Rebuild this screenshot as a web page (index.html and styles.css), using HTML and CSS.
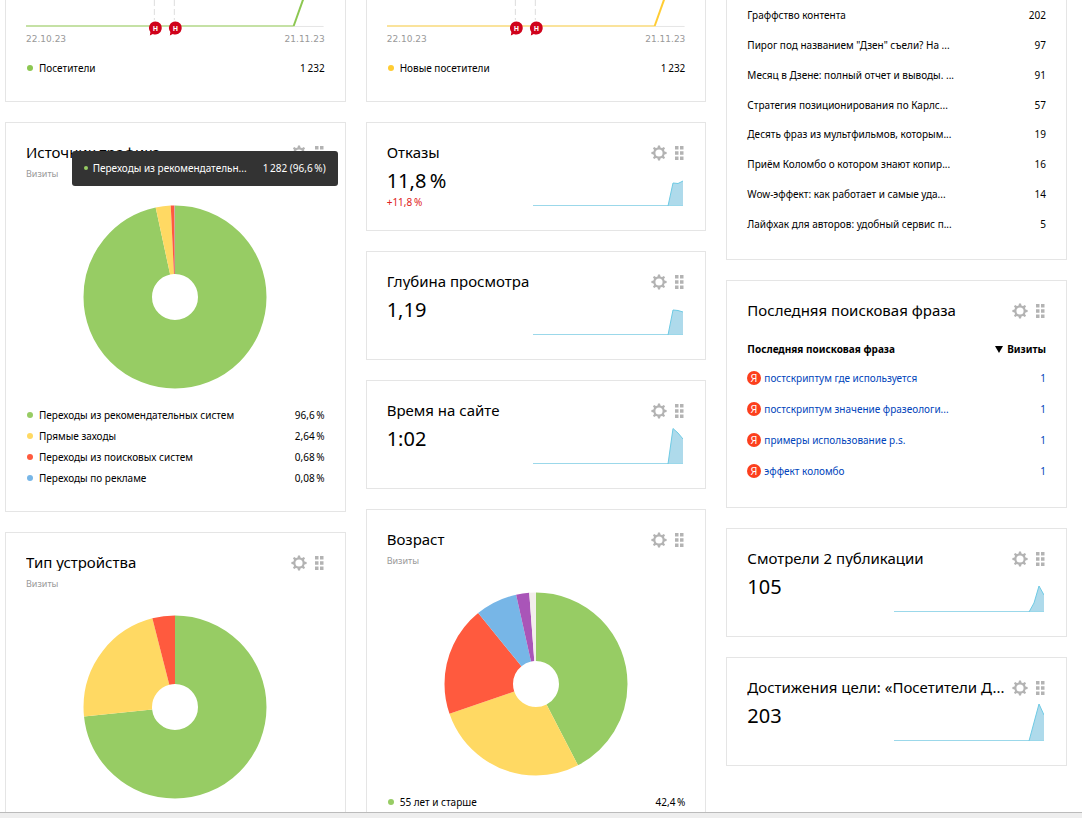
FILE: index.html
```html
<!DOCTYPE html>
<html lang="ru">
<head>
<meta charset="utf-8">
<meta name="viewport" content="width=device-width, initial-scale=1">
<title>Сводка</title>
<link rel="stylesheet" href="styles.css">
</head>
<body>
<svg class="defs" aria-hidden="true">
  <symbol id="gear" viewBox="0 0 16 16">
    <circle cx="8" cy="8" r="4.7" fill="none" stroke="currentColor" stroke-width="2.2"/>
    <g fill="currentColor">
      <path id="tooth" d="M6.5 3 7 .4h2L9.500 3z"/>
      <use href="#tooth" transform="rotate(45 8 8)"/>
      <use href="#tooth" transform="rotate(90 8 8)"/>
      <use href="#tooth" transform="rotate(135 8 8)"/>
      <use href="#tooth" transform="rotate(180 8 8)"/>
      <use href="#tooth" transform="rotate(225 8 8)"/>
      <use href="#tooth" transform="rotate(270 8 8)"/>
      <use href="#tooth" transform="rotate(315 8 8)"/>
    </g>
  </symbol>
  <symbol id="grip" viewBox="0 0 9 16">
    <path fill="currentColor" d="M0 1h3.500v3.500H0zM5 1h3.500v3.500H5zM0 6.200h3.500v3.500H0zM5 6.200h3.500v3.500H5zM0 11.500h3.500V15H0zM5 11.500h3.500V15H5z"/>
  </symbol>
  <symbol id="note" viewBox="0 0 14 15">
    <path fill="#d0021b" d="M7.500 .5a6.500 6.500 0 1 1-2.500 12.500L2 14.500 2.500 11A6.500 6.500 0 0 1 7.500 .5z"/>
    <text class="note-letter" x="7.500" y="10">Н</text>
  </symbol>
  <symbol id="ya" viewBox="0 0 14 14">
    <circle cx="7" cy="7" r="7" fill="#fc3f1d"/>
    <text class="ya-letter" x="7" y="11">Я</text>
  </symbol>
</svg>

<main class="board">
  <div class="column">
    <section class="card card-cut">
      <svg class="trend trend-green" viewBox="0 0 299 34" aria-hidden="true">
        <path class="axis" d="M0 26.500H298"/>
        <path class="mark" d="M128.500 0V20M148.500 0V20"/>
        <path class="flat" d="M0 26H268"/>
        <path class="rise" d="M268 26L278 -2"/>
        <use href="#note" x="122" y="21" width="14" height="15"/>
        <use href="#note" x="142" y="21" width="14" height="15"/>
      </svg>
      <div class="dates"><span>22.10.23</span><span>21.11.23</span></div>
      <ul class="legend">
        <li class="green strong"><span>Посетители</span><span>1&#8201;232</span></li>
      </ul>
    </section>

    <section class="card">
      <header class="head"><h2>Источник трафика</h2>
        <button class="tool" aria-label="Настройки"><svg class="gear"><use href="#gear"/></svg></button>
        <button class="tool" aria-label="Переместить"><svg class="grip"><use href="#grip"/></svg></button>
      </header>
      <p class="sub">Визиты</p>
      <svg class="pie" viewBox="0 0 184 184" role="img" aria-label="Источник трафика">
        <circle class="c-green" pathLength="100" cx="92" cy="92" r="57.250" stroke-dasharray="96.6 100"/>
        <circle class="c-yellow" pathLength="100" cx="92" cy="92" r="57.250" stroke-dasharray="2.64 100" stroke-dashoffset="-96.6"/>
        <circle class="c-red" pathLength="100" cx="92" cy="92" r="57.250" stroke-dasharray="0.68 100" stroke-dashoffset="-99.240"/>
        <circle class="c-blue" pathLength="100" cx="92" cy="92" r="57.250" stroke-dasharray="0.08 100" stroke-dashoffset="-99.920"/>
      </svg>
      <ul class="legend">
        <li class="green"><span>Переходы из рекомендательных систем</span><span>96,6&#8201;%</span></li>
        <li class="yellow"><span>Прямые заходы</span><span>2,64&#8201;%</span></li>
        <li class="red"><span>Переходы из поисковых систем</span><span>0,68&#8201;%</span></li>
        <li class="blue"><span>Переходы по рекламе</span><span>0,08&#8201;%</span></li>
      </ul>
      <div class="tip" role="tooltip"><span>Переходы из рекомендательн...</span><span>1&#8201;282 (96,6&#8201;%)</span></div>
    </section>

    <section class="card">
      <header class="head"><h2>Тип устройства</h2>
        <button class="tool" aria-label="Настройки"><svg class="gear"><use href="#gear"/></svg></button>
        <button class="tool" aria-label="Переместить"><svg class="grip"><use href="#grip"/></svg></button>
      </header>
      <p class="sub">Визиты</p>
      <svg class="pie" viewBox="0 0 184 184" role="img" aria-label="Тип устройства">
        <circle class="c-green" pathLength="100" cx="92" cy="92" r="57.250" stroke-dasharray="73.3 100"/>
        <circle class="c-yellow" pathLength="100" cx="92" cy="92" r="57.250" stroke-dasharray="22.7 100" stroke-dashoffset="-73.3"/>
        <circle class="c-red" pathLength="100" cx="92" cy="92" r="57.250" stroke-dasharray="4 100" stroke-dashoffset="-96"/>
      </svg>
    </section>
  </div>

  <div class="column">
    <section class="card card-cut">
      <svg class="trend trend-yellow" viewBox="0 0 299 34" aria-hidden="true">
        <path class="axis" d="M0 26.500H298"/>
        <path class="mark" d="M128.500 0V20M148.500 0V20"/>
        <path class="flat" d="M0 26H268"/>
        <path class="rise" d="M268 26L278 -2"/>
        <use href="#note" x="122" y="21" width="14" height="15"/>
        <use href="#note" x="142" y="21" width="14" height="15"/>
      </svg>
      <div class="dates"><span>22.10.23</span><span>21.11.23</span></div>
      <ul class="legend">
        <li class="amber strong"><span>Новые посетители</span><span>1&#8201;232</span></li>
      </ul>
    </section>

    <section class="card">
      <header class="head"><h2>Отказы</h2>
        <button class="tool" aria-label="Настройки"><svg class="gear"><use href="#gear"/></svg></button>
        <button class="tool" aria-label="Переместить"><svg class="grip"><use href="#grip"/></svg></button>
      </header>
      <div class="metric">
        <div><p class="value">11,8&#8201;%</p><p class="delta">+11,8&#8201;%</p></div>
        <svg class="spark" viewBox="0 0 150 47" aria-hidden="true"><path class="area" d="M135 43L140 20L145 20.500L150 18V43z"/><path class="base" d="M0 42.500H150"/><path class="line" d="M135 43L140 20L145 20.500L150 18"/></svg>
      </div>
    </section>

    <section class="card">
      <header class="head"><h2>Глубина просмотра</h2>
        <button class="tool" aria-label="Настройки"><svg class="gear"><use href="#gear"/></svg></button>
        <button class="tool" aria-label="Переместить"><svg class="grip"><use href="#grip"/></svg></button>
      </header>
      <div class="metric">
        <div><p class="value">1,19</p></div>
        <svg class="spark" viewBox="0 0 150 47" aria-hidden="true"><path class="area" d="M135 43L140 18L145 18.500L150 20V43z"/><path class="base" d="M0 42.500H150"/><path class="line" d="M135 43L140 18L145 18.500L150 20"/></svg>
      </div>
    </section>

    <section class="card">
      <header class="head"><h2>Время на сайте</h2>
        <button class="tool" aria-label="Настройки"><svg class="gear"><use href="#gear"/></svg></button>
        <button class="tool" aria-label="Переместить"><svg class="grip"><use href="#grip"/></svg></button>
      </header>
      <div class="metric">
        <div><p class="value">1:02</p></div>
        <svg class="spark" viewBox="0 0 150 47" aria-hidden="true"><path class="area" d="M135 43L140 7.500L145 12L150 18V43z"/><path class="base" d="M0 42.500H150"/><path class="line" d="M135 43L140 7.500L145 12L150 18"/></svg>
      </div>
    </section>

    <section class="card">
      <header class="head"><h2>Возраст</h2>
        <button class="tool" aria-label="Настройки"><svg class="gear"><use href="#gear"/></svg></button>
        <button class="tool" aria-label="Переместить"><svg class="grip"><use href="#grip"/></svg></button>
      </header>
      <p class="sub">Визиты</p>
      <svg class="pie" viewBox="0 0 184 184" role="img" aria-label="Возраст">
        <circle class="c-green" pathLength="100" cx="92" cy="92" r="57.250" stroke-dasharray="42.4 100"/>
        <circle class="c-yellow" pathLength="100" cx="92" cy="92" r="57.250" stroke-dasharray="27.3 100" stroke-dashoffset="-42.4"/>
        <circle class="c-red" pathLength="100" cx="92" cy="92" r="57.250" stroke-dasharray="19.4 100" stroke-dashoffset="-69.7"/>
        <circle class="c-blue" pathLength="100" cx="92" cy="92" r="57.250" stroke-dasharray="7.4 100" stroke-dashoffset="-89.1"/>
        <circle class="c-purple" pathLength="100" cx="92" cy="92" r="57.250" stroke-dasharray="2.3 100" stroke-dashoffset="-96.5"/>
        <circle class="c-grey" pathLength="100" cx="92" cy="92" r="57.250" stroke-dasharray="1.2 100" stroke-dashoffset="-98.8"/>
      </svg>
      <ul class="legend">
        <li class="green"><span>55 лет и старше</span><span>42,4&#8201;%</span></li>
      </ul>
    </section>
  </div>

  <div class="column">
    <section class="card card-cut card-list">
      <table class="pages">
        <tbody>
        <tr><td>Граффство контента</td><td>202</td></tr>
        <tr><td>Пирог под названием "Дзен" съели? На ...</td><td>97</td></tr>
        <tr><td>Месяц в Дзене: полный отчет и выводы. ...</td><td>91</td></tr>
        <tr><td>Стратегия позиционирования по Карлс...</td><td>57</td></tr>
        <tr><td>Десять фраз из мультфильмов, которым...</td><td>19</td></tr>
        <tr><td>Приём Коломбо о котором знают копир...</td><td>16</td></tr>
        <tr><td>Wow-эффект: как работает и самые уда...</td><td>14</td></tr>
        <tr><td>Лайфхак для авторов: удобный сервис п...</td><td>5</td></tr>
        </tbody>
      </table>
    </section>

    <section class="card">
      <header class="head"><h2>Последняя поисковая фраза</h2>
        <button class="tool" aria-label="Настройки"><svg class="gear"><use href="#gear"/></svg></button>
        <button class="tool" aria-label="Переместить"><svg class="grip"><use href="#grip"/></svg></button>
      </header>
      <table class="phrases">
        <thead><tr><th>Последняя поисковая фраза</th><th><i class="sort"></i>Визиты</th></tr></thead>
        <tbody>
        <tr><td><svg class="ya"><use href="#ya"/></svg><a href="#">постскриптум где используется</a></td><td>1</td></tr>
        <tr><td><svg class="ya"><use href="#ya"/></svg><a href="#">постскриптум значение фразеологи...</a></td><td>1</td></tr>
        <tr><td><svg class="ya"><use href="#ya"/></svg><a href="#">примеры использование p.s.</a></td><td>1</td></tr>
        <tr><td><svg class="ya"><use href="#ya"/></svg><a href="#">эффект коломбо</a></td><td>1</td></tr>
        </tbody>
      </table>
    </section>

    <section class="card">
      <header class="head"><h2>Смотрели 2 публикации</h2>
        <button class="tool" aria-label="Настройки"><svg class="gear"><use href="#gear"/></svg></button>
        <button class="tool" aria-label="Переместить"><svg class="grip"><use href="#grip"/></svg></button>
      </header>
      <div class="metric">
        <div><p class="value">105</p></div>
        <svg class="spark" viewBox="0 0 150 47" aria-hidden="true"><path class="area" d="M135 43L140 34L145 17L150 26V43z"/><path class="base" d="M0 42.500H150"/><path class="line" d="M135 43L140 34L145 17L150 26"/></svg>
      </div>
    </section>

    <section class="card">
      <header class="head"><h2>Достижения цели: «Посетители Д...</h2>
        <button class="tool" aria-label="Настройки"><svg class="gear"><use href="#gear"/></svg></button>
        <button class="tool" aria-label="Переместить"><svg class="grip"><use href="#grip"/></svg></button>
      </header>
      <div class="metric">
        <div><p class="value">203</p></div>
        <svg class="spark" viewBox="0 0 150 47" aria-hidden="true"><path class="area" d="M135 43L145 6L150 17V43z"/><path class="base" d="M0 42.500H150"/><path class="line" d="M135 43L145 6L150 17"/></svg>
      </div>
    </section>
  </div>
</main>
<footer class="bar"></footer>
</body>
</html>
```
FILE: styles.css
```css
* { box-sizing: border-box; }

body {
  margin: 0;
  height: 100vh;
  display: flex;
  flex-direction: column;
  overflow: hidden;
  background: #fff;
  color: #000;
  font: 10px/21px "Noto Sans", "Open Sans", sans-serif;
}

h2, p, ul { margin: 0; padding: 0; }

.defs { display: none; }

.board {
  flex: 1;
  min-height: 0;
  overflow: hidden;
  display: grid;
  grid-template-columns: repeat(3, minmax(0, 1fr));
  gap: 20px;
  padding: 0 15px 0 5px;
}

.column { display: flex; flex-direction: column; gap: 20px; }

.card {
  position: relative;
  flex: none;
  padding: 20px;
  border: 1px solid #e5e5e5;
}

.card-cut { border-top: 0; padding-top: 0; padding-bottom: 21px; }
.card-list { padding-bottom: 20px; }

.bar {
  flex: none;
  height: 6px;
  border-top: 1px solid #bbb;
  background: #eee;
}

/* Card header */
.head { display: flex; align-items: flex-start; height: 20px; padding-right: 1px; }
.head h2 {
  flex: 1;
  min-width: 0;
  overflow: hidden;
  white-space: nowrap;
  font-size: 15px;
  font-weight: 400;
  line-height: 18px;
}
.tool {
  flex: none;
  display: block;
  margin: 2px 0 0 8px;
  padding: 0;
  border: 0;
  background: none;
  color: #b3b3b3;
  cursor: pointer;
}
.tool svg { display: block; }
.gear { width: 16px; height: 16px; }
.grip { width: 9px; height: 16px; }

.sub { margin-top: 4px; color: #999; font-size: 9px; line-height: 14px; }

/* Trend charts */
.trend { display: block; width: 100%; height: auto; overflow: visible; }
.trend path { fill: none; }
.axis { stroke: #e5e5e5; }
.mark { stroke: #ddd; stroke-dasharray: 6 3; }
.flat { stroke-width: 2; }
.rise { stroke-width: 2; }
.trend-green .flat { stroke: #c5e1a5; }
.trend-green .rise { stroke: #8cc751; }
.trend-yellow .flat { stroke: #fae39c; }
.trend-yellow .rise { stroke: #ffcc33; }
.note-letter { font: bold 7px "Open Sans", sans-serif; fill: #fff; text-anchor: middle; }
.dates {
  display: flex;
  justify-content: space-between;
  padding-bottom: 14px;
  color: #999;
  font: 9px/10px "DejaVu Sans", sans-serif;
}

/* Pie charts */
.pie { display: block; width: 184px; height: 184px; margin: 24px auto 16px; }
.pie circle { fill: none; stroke-width: 68.5; transform: rotate(-90deg); transform-origin: center; }
.c-green { stroke: #97cc64; }
.c-yellow { stroke: #ffd963; }
.c-red { stroke: #ff5a3e; }
.c-blue { stroke: #77b6e7; }
.c-purple { stroke: #a955b8; }
.c-grey { stroke: #f2eeeb; }

.legend { list-style: none; padding-bottom: 1px; }
.pie + .legend { padding-bottom: 2px; }
.legend li { display: flex; align-items: center; white-space: nowrap; }
.legend li::before {
  content: "";
  width: 6px;
  height: 6px;
  margin: 0 6px 0 1px;
  border-radius: 50%;
  background: currentColor;
}
.legend span { color: #000; }
.legend span:last-child { margin-left: auto; }
.green { color: #97cc64; }
.green.strong { color: #8cc751; }
.yellow { color: #ffd963; }
.amber { color: #ffcc33; }
.red { color: #ff5a3e; }
.blue { color: #77b6e7; }

.tip {
  position: absolute;
  top: 28px;
  right: 7px;
  display: flex;
  align-items: center;
  gap: 5px;
  min-width: 266px;
  height: 35px;
  padding: 0 12px;
  border-radius: 3px;
  background: #333;
  color: #fff;
  white-space: nowrap;
}
.tip::before {
  content: "";
  width: 4px;
  height: 4px;
  border-radius: 50%;
  background: #97cc64;
}
.tip span:last-child { margin-left: auto; }

/* Metrics */
.metric { display: flex; justify-content: space-between; height: 47px; padding-right: 2px; }
.value { margin-top: 4px; font-size: 20px; line-height: 28px; }
.delta { color: #e02020; line-height: 14px; }
.spark { width: 150px; height: 47px; }
.area { fill: #aedaeb; }
.base { fill: none; stroke: #9bd8ea; }
.line { fill: none; stroke: #6ecae4; }

/* Tables */
table { width: 100%; border-collapse: collapse; }
td, th { padding: 0; text-align: left; white-space: nowrap; }
td:last-child, th:last-child { text-align: right; }
.card-cut .pages { margin-top: 1px; height: 238px; }
.phrases { margin-top: 15px; }
.phrases tr { height: 31px; }
.phrases thead tr { height: 27px; }
.phrases td:last-child, .phrases a { color: #04b; text-decoration: none; }
.sort {
  display: inline-block;
  margin-right: 4px;
  border: 4px solid transparent;
  border-width: 7px 4px 0;
  border-top-color: #000;
}
.ya { width: 14px; height: 14px; margin-right: 3px; vertical-align: -3px; }
.ya-letter { font: 11px "Open Sans", sans-serif; fill: #fff; text-anchor: middle; }
```
